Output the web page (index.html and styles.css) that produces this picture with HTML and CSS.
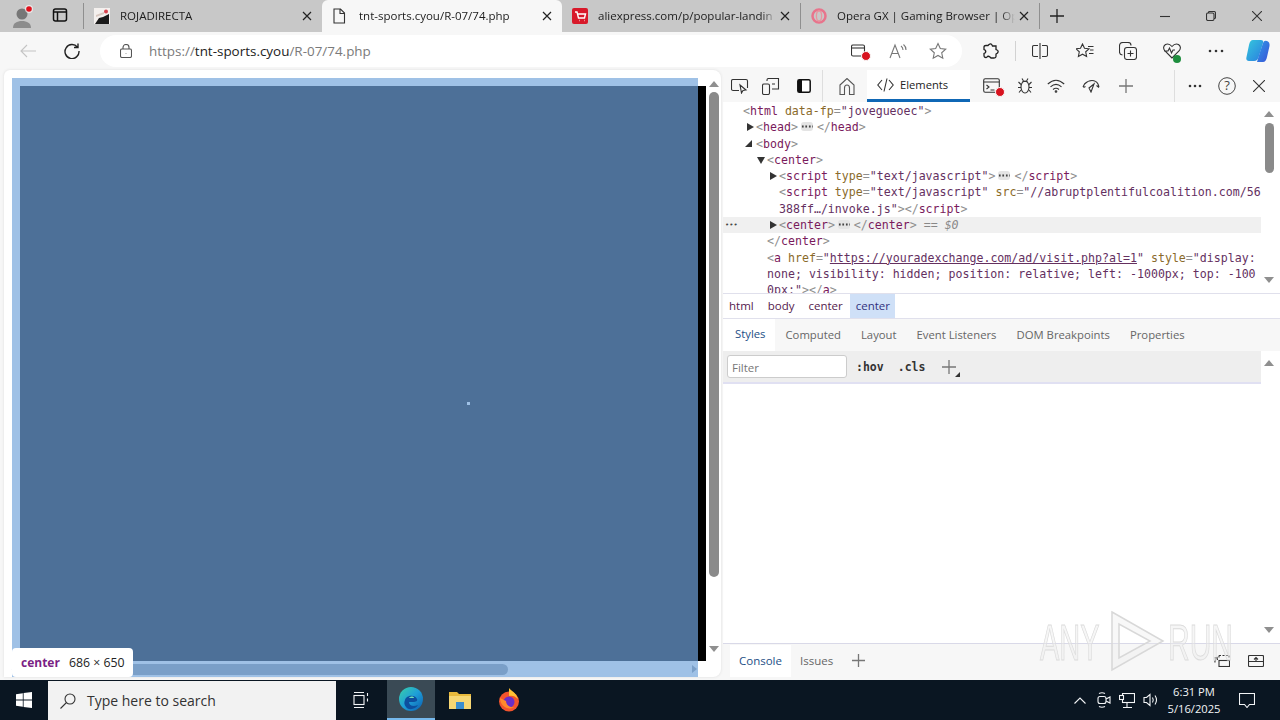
FILE: index.html
```html
<!DOCTYPE html>
<html lang="en">
<head>
  <meta charset="UTF-8">
  <title>tnt-sports.cyou/R-07/74.php</title>
  <link rel="stylesheet" href="styles.css">
</head>
<body>

  <!-- tab strip -->
  <div class="tabstrip">
    <div class="profile">
      <svg width="22" height="24" viewBox="0 0 22 24"><circle cx="10" cy="10" r="5.5" fill="#777"/><path d="M1 24c0-5 4-7 9-7s9 2 9 7z" fill="#8c8c8c"/><circle cx="17" cy="5" r="4" fill="#fff" opacity=".6"/><circle cx="17" cy="5" r="2.8" fill="#e0101c"/></svg>
    </div>
    <div class="strip-btn">
      <svg class="ico" width="16" height="16" viewBox="0 0 16 16"><rect x="1.5" y="2" width="13" height="12" rx="2"/><path d="M1.5 5h13M5.5 5v9" /></svg>
    </div>
    <div class="tab first">
      <svg width="16" height="16" viewBox="0 0 16 16"><rect width="16" height="16" fill="#f4f0ee"/><path d="M1 16l4-6 4-1 6-3v10z" fill="#1b1b1b"/><path d="M2 7l8-3v2l-8 3z" fill="#d9c8c0"/><circle cx="12" cy="3.5" r="2" fill="#d8434e"/></svg>
      <span class="tab-title">ROJADIRECTA</span>
      <svg class="ico close" width="10" height="10" viewBox="0 0 10 10"><path d="M1 1l8 8M9 1l-8 8"/></svg>
    </div>
    <div class="tab active">
      <svg class="ico" width="14" height="16" viewBox="0 0 14 16"><path d="M2 1h6.5L12.5 5v10H2zM8 1v4.5h4.5"/></svg>
      <span class="tab-title">tnt-sports.cyou/R-07/74.php</span>
      <svg class="ico close" width="10" height="10" viewBox="0 0 10 10"><path d="M1 1l8 8M9 1l-8 8"/></svg>
    </div>
    <div class="tab">
      <svg width="16" height="16" viewBox="0 0 16 16"><rect width="16" height="16" rx="2" fill="#d8192a"/><path d="M3 4h2l1.5 6h6l1-4H6M7 12.5h.5M12 12.5h.5" fill="none" stroke="#fff" stroke-width="1.4"/></svg>
      <span class="tab-title">aliexpress.com/p/popular-landin</span>
      <svg class="ico close" width="10" height="10" viewBox="0 0 10 10"><path d="M1 1l8 8M9 1l-8 8"/></svg>
    </div>
    <div class="tab last">
      <svg width="16" height="16" viewBox="0 0 16 16"><circle cx="8" cy="8" r="6.5" fill="none" stroke="#e8748c" stroke-width="2.5"/><ellipse cx="8" cy="8" rx="2.6" ry="5" fill="none" stroke="#e8949f" stroke-width="1.3"/></svg>
      <span class="tab-title">Opera GX | Gaming Browser | Op</span>
      <svg class="ico close" width="10" height="10" viewBox="0 0 10 10"><path d="M1 1l8 8M9 1l-8 8"/></svg>
    </div>
    <div class="new-tab">
      <svg class="ico" width="14" height="14" viewBox="0 0 14 14"><path d="M7 0v14M0 7h14"/></svg>
    </div>
    <div class="win-controls">
      <svg class="ico" width="10" height="10" viewBox="0 0 10 10"><path d="M0 5.5h10"/></svg>
      <svg class="ico" width="10" height="10" viewBox="0 0 10 10"><rect x=".5" y="2" width="7.5" height="7.5" rx="1.5"/><path d="M2.5 2V1.5q0-1 1-1H8q1.5 0 1.5 1.5v4.5q0 1-1 1H8"/></svg>
      <svg class="ico" width="10" height="10" viewBox="0 0 10 10"><path d="M0 0l10 10M10 0L0 10"/></svg>
    </div>
  </div>

  <!-- address bar -->
  <div class="toolbar">
    <svg class="ico back" width="16" height="14" viewBox="0 0 16 14"><path d="M16 7H1M7 1L1 7l6 6"/></svg>
    <svg class="ico refresh" width="16" height="16" viewBox="0 0 16 16"><path d="M13.5 4.2A7 7 0 1 0 15 8M14 .5v4h-4"/></svg>
    <div class="address">
      <svg class="ico lock" width="12" height="14" viewBox="0 0 12 14"><rect x=".5" y="5" width="11" height="8.5" rx="1.5"/><path d="M3 5V3.5a3 3 0 0 1 6 0V5M6 9v.5"/></svg>
      <span class="url">https://<b>tnt-sports.cyou</b>/R-07/74.php</span>
      <div class="address-icons">
        <span class="badged">
          <svg class="ico" width="16" height="14" viewBox="0 0 16 14"><rect x=".5" y="1" width="13" height="11" rx="1.5"/><path d="M.5 4h13"/></svg>
          <i class="red-dot"></i>
        </span>
        <svg class="ico light" width="18" height="16" viewBox="0 0 18 16"><path d="M1 15L6 2l5 13M3 10.5h6M12 3q2 1.5 2 4M14.5 1.5q2.5 2 2.5 5.5"/></svg>
        <svg class="ico light" width="18" height="18" viewBox="0 0 18 18"><path d="M9 1.5l2.3 5 5.4.6-4 3.7 1.1 5.4L9 13.5l-4.8 2.7 1.1-5.4-4-3.7 5.4-.6z"/></svg>
      </div>
    </div>
    <div class="tool-icons">
      <svg class="ico ext" width="16" height="16" viewBox="0 0 16 16"><path d="M6 1.5q2-1.5 3 .5l.5 1h3.5v3.5l1 .5q2 1 .5 3l-1.5 1v2.5q0 1.5-2 1.5H8l-1-1q-2-1.5-3 0l-1 .5q-2 0-2-2v-2l1-.5q1.5-1.5 0-3l-1-.5V4q0-1.5 2-1.5h2z"/></svg>
      <i class="tool-sep"></i>
      <svg class="ico split" width="16" height="16" viewBox="0 0 16 16"><path d="M8 0v16M6 2.5H2q-1.5 0-1.5 1.5v8q0 1.5 1.5 1.5h4M10 2.5h4q1.5 0 1.5 1.5v8q0 1.5-1.5 1.5h-4"/></svg>
      <svg class="ico fav" width="18" height="16" viewBox="0 0 18 16"><path d="M6.5 1l2 4.3 4.5.5-3.3 3 .9 4.7-4.1-2.3-4.1 2.3.9-4.7L0 5.8l4.5-.5zM12 3.5h5.5M14 7h3.5M13 10.5h4.5"/></svg>
      <svg class="ico coll" width="18" height="18" viewBox="0 0 18 18"><rect x="5.5" y="5.5" width="12" height="12" rx="2.5"/><path d="M11.5 8.5v6M8.5 11.5h6M3.5 13q-3-.5-3-3V4q0-3.5 3.5-3.5h5q3 0 3 3"/></svg>
      <span class="health">
        <svg class="ico" width="18" height="16" viewBox="0 0 18 16"><path d="M9 15L2 8Q-1 4 2.5 1.5 6 0 9 3.5 12-0 15.5 1.5 19 4 16 8L9 15zM1 8h4l1.5-3 2 5 1.5-3h2"/></svg>
        <i class="green-dot"></i>
      </span>
      <svg class="dots" width="16" height="4" viewBox="0 0 16 4"><circle cx="2" cy="2" r="1.3"/><circle cx="8" cy="2" r="1.3"/><circle cx="14" cy="2" r="1.3"/></svg>
      <svg class="copilot" width="24" height="24" viewBox="0 0 24 24"><defs><linearGradient id="cop" x1="0" y1="0" x2="1" y2="1"><stop offset="0" stop-color="#35c8dc"/><stop offset="1" stop-color="#2a7de0"/></linearGradient><linearGradient id="cop2" x1="0" y1="0" x2="1" y2="1"><stop offset="0" stop-color="#2f9be8"/><stop offset="1" stop-color="#3a52d6"/></linearGradient></defs><path d="M7 1h8q3 0 2 3l-4 13q-1 5-5 5H3q-3.500 0-2.500-4L3 6q1-5 4-5z" fill="url(#cop)"/><path d="M11 23l3-10 3-9q1-3 4-2 3 1 2.500 5L21 18q-1 5-4 5z" fill="url(#cop2)"/></svg>
    </div>
  </div>

  <div class="main">
    <!-- page viewport -->
    <div class="viewport">
      <div class="page">
        <div class="page-col">
          <div class="hl-top"></div>
          <div class="hl-mid">
            <div class="hl-left"></div>
            <div class="hl-inner"></div>
            <div class="black-strip"></div>
          </div>
          <div class="hscroll">
            <div class="hthumb"></div>
            <i class="harrow"></i>
          </div>
        </div>
        <div class="vscroll">
          <i class="tri up"></i>
          <div class="vthumb"></div>
          <i class="tri down"></i>
        </div>
      </div>
      <i class="center-dot"></i>
      <div class="hl-tip"><b>center</b><span>686 × 650</span></div>
    </div>

    <!-- devtools -->
    <div class="devtools">
      <div class="dt-toolbar">
        <svg class="ico" width="18" height="16" viewBox="0 0 18 16"><path d="M8 12.5H2q-1.5 0-1.5-1.5V3q0-1.5 1.5-1.5h13Q16.500 1.500 16.500 3v7M9 7l1.500 8 1.500-2.500 3-.5z"/></svg>
        <svg class="ico" width="18" height="17" viewBox="0 0 18 17"><rect x=".5" y="6" width="7" height="10.5" rx="1.5"/><path d="M5 3V2q0-1.5 1.5-1.5h10V11H10M10 6h3"/></svg>
        <svg class="dock" width="14" height="14" viewBox="0 0 14 14"><rect x=".8" y=".8" width="12.4" height="12.4" rx="1.5" fill="#fff" stroke="#111" stroke-width="1.5"/><rect x="1" y="1" width="4" height="12" fill="#111"/></svg>
        <i class="dt-sep"></i>
        <svg class="ico home" width="16" height="17" viewBox="0 0 16 17"><path d="M1 7l7-6.500L15 7v9.500h-4.500V10q0-3-2.500-3T5.500 10v6.500H1z"/></svg>
        <div class="dt-tab">
          <svg class="ico" width="17" height="14" viewBox="0 0 17 14"><path d="M5 2L.8 7 5 12M12 2l4.200 5L12 12M10 .5L7 13.500"/></svg>
          <span>Elements</span>
        </div>
        <span class="badged">
          <svg class="ico" width="18" height="16" viewBox="0 0 18 16"><rect x=".7" y=".7" width="15.6" height="13.6" rx="1.5"/><path d="M.7 4h15.600M3.500 7l2.500 2-2.500 2M7.500 12h4"/></svg>
          <i class="red-dot"></i>
        </span>
        <svg class="ico dt-bug" width="16" height="16" viewBox="0 0 16 16"><ellipse cx="8" cy="9" rx="4" ry="6"/><path d="M5.500 3.500h5M4 6.500L1.500 4M12 6.500L14.500 4M4 9.500H1M12 9.500h3M4 12l-2 2.500M12 12l2 2.500M5 .5l1.500 2.500M11 .5L9.500 3"/></svg>
        <svg class="ico dt-wifi" width="18" height="14" viewBox="0 0 18 14"><path d="M.8 5Q9-2.500 17.200 5M3.500 7.800Q9 3 14.500 7.800M6 10.500q3-2.500 6 0"/><circle cx="9" cy="12.5" r=".8"/></svg>
        <svg class="ico dt-perf" width="18" height="14" viewBox="0 0 18 14"><path d="M1 8l1.500-3Q6 1.500 10 1.500T16 5l1 3M9 13l3-8-5 4zM1.500 8.500l2-1M14.500 6.500l2.500 2"/></svg>
        <svg class="ico faint dt-plus" width="14" height="14" viewBox="0 0 14 14"><path d="M7 0v14M0 7h14"/></svg>
        <i class="dt-sep right"></i>
        <svg class="dots" width="14" height="4" viewBox="0 0 14 4"><circle cx="2" cy="2" r="1.3"/><circle cx="7" cy="2" r="1.3"/><circle cx="12" cy="2" r="1.3"/></svg>
        <svg class="help" width="18" height="18" viewBox="0 0 18 18"><circle cx="9" cy="9" r="8.3" fill="none" stroke="#444"/><text x="9" y="13.2" text-anchor="middle">?</text></svg>
        <svg class="ico dt-close" width="12" height="12" viewBox="0 0 12 12"><path d="M0 0l12 12M12 0L0 12"/></svg>
      </div>

      <div class="dom-pane">
        <div class="dom-tree">
          <div class="row i0"><span class="br">&lt;</span><span class="tg">html</span> <span class="an">data-fp</span><span class="br">=</span><span class="av">"jovegueoec"</span><span class="br">&gt;</span></div>
          <div class="row i1"><i class="arrow"></i><span class="br">&lt;</span><span class="tg">head</span><span class="br">&gt;</span><i class="chip"></i><span class="br">&lt;/</span><span class="tg">head</span><span class="br">&gt;</span></div>
          <div class="row i1"><i class="arrow turning"></i><span class="br">&lt;</span><span class="tg">body</span><span class="br">&gt;</span></div>
          <div class="row i2"><i class="arrow open"></i><span class="br">&lt;</span><span class="tg">center</span><span class="br">&gt;</span></div>
          <div class="row i3"><i class="arrow"></i><span class="br">&lt;</span><span class="tg">script</span> <span class="an">type</span><span class="br">=</span><span class="av">"text/javascript"</span><span class="br">&gt;</span><i class="chip"></i><span class="br">&lt;/</span><span class="tg">script</span><span class="br">&gt;</span></div>
          <div class="row i3"><span class="br">&lt;</span><span class="tg">script</span> <span class="an">type</span><span class="br">=</span><span class="av">"text/javascript"</span> <span class="an">src</span><span class="br">=</span><span class="av">"//abruptplentifulcoalition.com/56</span></div>
          <div class="row i3"><span class="av">388ff…/invoke.js"</span><span class="br">&gt;&lt;/</span><span class="tg">script</span><span class="br">&gt;</span></div>
          <div class="row i3 selected"><span class="row-dots">•••</span><i class="arrow"></i><span class="br">&lt;</span><span class="tg">center</span><span class="br">&gt;</span><i class="chip"></i><span class="br">&lt;/</span><span class="tg">center</span><span class="br">&gt;</span> <span class="eq">== <em>$0</em></span></div>
          <div class="row i2"><span class="br">&lt;/</span><span class="tg">center</span><span class="br">&gt;</span></div>
          <div class="row i2"><span class="br">&lt;</span><span class="tg">a</span> <span class="an">href</span><span class="br">=</span><span class="av">"<u>https://youradexchange.com/ad/visit.php?al=1</u>"</span> <span class="an">style</span><span class="br">=</span><span class="av">"display:</span></div>
          <div class="row i2"><span class="av">none; visibility: hidden; position: relative; left: -1000px; top: -100</span></div>
          <div class="row i2"><span class="av">0px:"</span><span class="br">&gt;&lt;/</span><span class="tg">a</span><span class="br">&gt;</span></div>
        </div>
        <div class="pane-scroll">
          <i class="tri up"></i>
          <div class="dom-thumb"></div>
          <i class="tri down"></i>
        </div>
      </div>

      <div class="crumbs">
        <span>html</span><span>body</span><span>center</span><span class="crumb-on">center</span>
      </div>

      <div class="subtabs">
        <span class="subtab-on">Styles</span><span>Computed</span><span>Layout</span><span>Event Listeners</span><span>DOM Breakpoints</span><span>Properties</span>
      </div>

      <div class="styles-pane">
        <div class="styles-col">
          <div class="filter-bar">
            <div class="filter">Filter</div>
            <span class="mono-btn">:hov</span>
            <span class="mono-btn">.cls</span>
            <svg class="ico faint plus-rule" width="14" height="14" viewBox="0 0 14 14"><path d="M7 0v14M0 7h14"/></svg>
            <i class="corner"></i>
          </div>
        </div>
        <div class="pane-scroll styles-scroll">
          <i class="tri up"></i>
          <i class="tri down"></i>
        </div>
      </div>

      <div class="drawer">
        <span class="drawer-on">Console</span>
        <span class="drawer-tab">Issues</span>
        <svg class="ico faint" width="13" height="13" viewBox="0 0 13 13"><path d="M6.5 0v13M0 6.5h13"/></svg>
        <div class="drawer-right">
          <svg class="ico" width="16" height="12" viewBox="0 0 16 12"><path d="M5 .5h10M5 .5v3M15 .5v3" stroke-dasharray="2 1.5"/><rect x="5" y="5.5" width="10.5" height="6"/><path d="M3 3Q.5 4.5 1 7.5M.5 3l2.500-.5L3.500 5"/></svg>
          <svg class="ico" width="16" height="12" viewBox="0 0 16 12"><rect x=".5" y=".5" width="15" height="11" rx="1"/><path d="M.5 6.5h15M8 6V2.500M6 4.500l2-2 2 2"/></svg>
        </div>
      </div>
    </div>

    <div class="watermark">
      <span class="wm-any">ANY</span>
      <svg width="55" height="62" viewBox="0 0 55 62"><path d="M2 2l51 29L2 60zM9 14v34l31-17z" fill="rgba(235,235,235,.35)" stroke="#d8d8d8" stroke-width="1.5"/></svg>
      <span class="wm-run">RUN</span>
    </div>
  </div>

  <!-- windows taskbar -->
  <div class="taskbar">
    <div class="start">
      <svg width="16" height="16" viewBox="0 0 16 16"><path d="M0 2.200L6.800 1.200V7.600H0zM7.600 1.100L16 0V7.600H7.600zM0 8.400H6.800V14.800L0 13.800zM7.600 8.400H16V16L7.600 14.900z" fill="#fff"/></svg>
    </div>
    <div class="search">
      <svg class="ico" width="16" height="16" viewBox="0 0 16 16"><circle cx="10" cy="6" r="5"/><path d="M6.500 9.500L.5 15.500"/></svg>
      <span>Type here to search</span>
    </div>
    <div class="task-btn">
      <svg class="ico white" width="16" height="16" viewBox="0 0 16 16"><path d="M1 .5h10M1 15.500h10"/><rect x="1" y="3.5" width="10" height="9"/><path d="M14.500 1v3M14.500 6.500v3"/></svg>
    </div>
    <div class="task-btn on">
      <svg width="24" height="24" viewBox="0 0 24 24"><defs><linearGradient id="edge" x1="0" y1="0" x2="1" y2="1"><stop offset="0" stop-color="#3ad0a8"/><stop offset=".5" stop-color="#1e9fd8"/><stop offset="1" stop-color="#0c5cb0"/></linearGradient></defs><circle cx="12" cy="12" r="12" fill="url(#edge)"/><path d="M6 13c1-5 10-6 12-1 1 2-1 3-4 3H10c0 4 5 5 9 3-2 4-9 6-12 2-2-2-2-5-1-7z" fill="#0d4f9e"/><path d="M10 11c1-2 5-2 5 0z" fill="#6fe0b8"/></svg>
    </div>
    <div class="task-btn">
      <svg width="22" height="20" viewBox="0 0 22 20"><path d="M0 2h8l2 2h12v15H0z" fill="#e8b93c"/><rect y="6" width="22" height="13" fill="#f7d774"/><rect x="7" y="12" width="8" height="7" fill="#3b8ed0"/></svg>
    </div>
    <div class="task-btn">
      <svg width="24" height="24" viewBox="0 0 24 24"><circle cx="12" cy="13.5" r="10" fill="#f2542d"/><path d="M12 0c2 3 7 4 9 11-3-3-6-4-9-3z" fill="#ffc233"/><circle cx="12" cy="14" r="5.5" fill="#6a2ec8"/><path d="M3 10c0 8 8 13 15 9-5 1-9-2-9-6z" fill="#ff8a2c"/></svg>
    </div>
    <div class="tray">
      <svg class="ico white chevron" width="12" height="7" viewBox="0 0 12 7"><path d="M.5 6.500L6 1l5.500 5.500"/></svg>
      <svg class="ico white" width="14" height="16" viewBox="0 0 14 16"><rect x="1" y="4.5" width="8" height="7" rx="2"/><path d="M9 7l4-2v6L9 9M2 1.500q3-1.500 6 0M2 14.500q3 1.500 6 0"/></svg>
      <svg class="ico white" width="16" height="15" viewBox="0 0 16 15"><rect x="3.5" y=".5" width="12" height="9"/><rect x=".5" y="2.5" width="4" height="4" fill="#0a1622"/><path d="M8 9.500v5M4 14.500h9"/></svg>
      <svg class="ico white" width="16" height="14" viewBox="0 0 16 14"><path d="M1 4.500h2.500L7 1.500v11l-3.500-3H1zM9.500 4.500q1.500 2.500 0 5M12 2.500q3 4.500 0 9"/></svg>
      <div class="clock"><span>6:31 PM</span><span>5/16/2025</span></div>
      <svg class="ico white notif" width="16" height="15" viewBox="0 0 16 15"><path d="M.5.500h15v11h-5L8 14.500 5.500 11.500h-5z"/></svg>
    </div>
  </div>

</body>
</html>
```
FILE: styles.css
```css
* {
  box-sizing: border-box;
}

html,
body {
  margin: 0;
  height: 100%;
}

body {
  width: 1280px;
  height: 720px;
  overflow: hidden;
  display: flex;
  flex-direction: column;
  font-family: "Open Sans", "Noto Sans", sans-serif;
  font-size: 12px;
  color: #222;
  background: #f7f7f7;
}

i {
  font-style: normal;
}

svg {
  flex: none;
  display: block;
}

.ico {
  fill: none;
  stroke: #333;
  stroke-width: 1.1;
}

.ico.light {
  stroke: #777;
}

.ico.faint {
  stroke: #777;
  stroke-width: 1.3;
}

.ico.white {
  stroke: #f2f4f6;
}

.dots {
  fill: #333;
}

/* tab strip */

.tabstrip {
  height: 32px;
  flex: none;
  display: flex;
  align-items: stretch;
  background: #c8c8c8;
}

.profile {
  width: 44px;
  padding: 4px 0 0 12px;
}

.strip-btn {
  width: 40px;
  height: 26px;
  align-self: center;
  padding: 4px 0 0 8px;
  border-right: 1px solid #8f8f8f;
}

.strip-btn .ico {
  stroke-width: 1.5;
  stroke: #111;
}

.tab {
  width: 238px;
  display: flex;
  align-items: center;
  gap: 10px;
  padding: 0 10px 1px 10px;
}

.tab.active {
  width: 240px;
  background: #f7f7f7;
  border-radius: 6px 6px 0 0;
  gap: 13px;
}

.tab.last {
  width: 240px;
  height: 26px;
  align-self: center;
  border-left: 1px solid #8f8f8f;
  border-right: 1px solid #8f8f8f;
}

.tab-title {
  flex: 1;
  min-width: 0;
  font-size: 11.5px;
  white-space: nowrap;
  color: #1c1c1c;
  -webkit-mask-image: linear-gradient(to left, transparent 0, #000 14px);
  mask-image: linear-gradient(to left, transparent 0, #000 14px);
}

.close {
  margin-left: -6px;
  stroke: #222;
  stroke-width: 1.2;
}

.new-tab {
  width: 34px;
  display: flex;
  align-items: center;
  justify-content: center;
}

.new-tab .ico {
  stroke: #222;
  stroke-width: 1.3;
}

.win-controls {
  margin-left: auto;
  width: 138px;
  display: flex;
  align-items: center;
  justify-content: space-between;
  padding: 0 18px;
}

/* address bar */

.toolbar {
  height: 38px;
  flex: none;
  display: flex;
  align-items: center;
  padding-left: 20px;
  background: #f7f7f7;
}

.back {
  stroke: #c4c4c4;
}

.refresh {
  margin-left: 28px;
  stroke-width: 1.4;
  stroke: #222;
}

.address {
  width: 862px;
  height: 32px;
  margin-left: 20px;
  padding: 0 15px 0 20px;
  display: flex;
  align-items: center;
  background: #fff;
  border-radius: 16px;
}

.lock {
  stroke: #555;
}

.url {
  margin-left: 17px;
  font-size: 13.45px;
  color: #7a7a7a;
}

.url b {
  font-weight: 400;
  color: #222;
}

.address-icons {
  margin-left: auto;
  display: flex;
  align-items: center;
  gap: 22px;
}

.badged {
  position: relative;
  display: block;
}

.red-dot {
  position: absolute;
  right: -4px;
  bottom: -3px;
  width: 10px;
  height: 10px;
  border-radius: 50%;
  background: #d8131f;
  border: 1px solid #f7f7f7;
}

.tool-icons {
  flex: 1;
  display: flex;
  align-items: center;
  padding-left: 21px;
}

.ext {
  stroke-width: 1.3;
  stroke: #222;
}

.tool-sep {
  width: 1px;
  height: 20px;
  margin: 0 16px;
  background: #d2d2d2;
}

.fav {
  margin-left: 28px;
}

.coll {
  margin-left: 25px;
}

.health {
  position: relative;
  margin-left: 26px;
}

.green-dot {
  position: absolute;
  right: 0;
  bottom: -4px;
  width: 8px;
  height: 8px;
  border-radius: 50%;
  background: #1e8e3e;
}

.tool-icons > .dots {
  margin-left: 27px;
}

.copilot {
  margin-left: 22px;
}

/* main area */

.main {
  flex: 1;
  min-height: 0;
  display: flex;
  position: relative;
  padding-left: 4px;
}

.viewport {
  width: 717px;
  height: 607px;
  padding: 8px 0 0 8px;
  position: relative;
  background: #fff;
  border-radius: 6px 8px 8px 0;
  box-shadow: 0 0 3px #ddd;
}

.page {
  height: 100%;
  display: flex;
}

.page-col {
  width: 694px;
  display: flex;
  flex-direction: column;
}

.hl-top {
  height: 8px;
  width: 686px;
  background: #9fc1e6;
}

.hl-mid {
  flex: 1;
  display: flex;
}

.hl-left {
  width: 8px;
  background: #9fc1e6;
}

.hl-inner {
  width: 678px;
  background: #4d7098;
}

.black-strip {
  width: 8px;
  background: #000;
}

.hscroll {
  height: 16px;
  width: 686px;
  padding-top: 3px;
  position: relative;
  background: #9fc1e6;
}

.hthumb {
  width: 496px;
  height: 11px;
  border-radius: 6px;
  background: #7a9fc8;
}

.harrow {
  position: absolute;
  right: 1px;
  top: 4px;
  border-left: 5px solid #7a9fc8;
  border-top: 4px solid transparent;
  border-bottom: 4px solid transparent;
}

.vscroll {
  width: 15px;
  display: flex;
  flex-direction: column;
  align-items: center;
  padding: 3px 0 25px;
}

.vthumb {
  width: 10px;
  height: 485px;
  margin: 5px 0 auto;
  border-radius: 5px;
  background: #8a8a8a;
}

.tri {
  display: block;
  border-left: 5px solid transparent;
  border-right: 5px solid transparent;
}

.tri.up {
  border-bottom: 6px solid #8f8f8f;
}

.tri.down {
  border-top: 6px solid #8f8f8f;
}

.center-dot {
  position: absolute;
  left: 463px;
  top: 332px;
  width: 3px;
  height: 3px;
  background: #9fc1e6;
}

.hl-tip {
  position: absolute;
  left: 8px;
  bottom: 0;
  width: 121px;
  height: 29px;
  padding-left: 9px;
  display: flex;
  align-items: center;
  gap: 9px;
  background: #fff;
  border-radius: 4px;
  font-size: 12.3px;
}

.hl-tip b {
  color: #7b1f85;
  font-size: 12px;
  font-weight: 700;
}

/* devtools */

.devtools {
  width: 557px;
  height: 610px;
  margin-left: 2px;
  padding-bottom: 3px;
  display: flex;
  flex-direction: column;
  background: #f7f7f7;
}

.dt-toolbar {
  height: 32px;
  flex: none;
  display: flex;
  align-items: center;
  padding-left: 8px;
  gap: 13px;
  background: #f7f7f7;
}

.dock {
  margin-left: 4px;
}

.dt-sep {
  width: 1px;
  height: 32px;
  margin-left: -2px;
  background: #dedede;
}

.dt-sep.right {
  margin-left: 28px;
}

.dt-tab {
  width: 103px;
  height: 32px;
  padding-left: 10px;
  display: flex;
  align-items: center;
  gap: 6px;
  font-size: 11.2px;
  background: #fff;
  border-bottom: 3px solid #0f67b5;
}

.home {
  margin-left: 3px;
  margin-right: -1px;
  stroke: #555;
}

.dt-bug {
  margin-left: 3px;
}

.dt-wifi {
  margin-left: 1px;
}

.dt-perf {
  margin-left: 4px;
}

.dt-plus {
  margin-left: 6px;
}

.help {
  margin-left: 3px;
}

.dt-close {
  margin-left: 4px;
}

.help text {
  font-size: 13px;
  fill: #444;
}

/* dom tree */

.dom-pane {
  height: 192px;
  flex: none;
  display: flex;
  background: #fff;
  border-bottom: 1px solid #e0e0ec;
}

.dom-tree {
  width: 538px;
  padding-top: 1px;
  font-family: "DejaVu Sans Mono", "Liberation Mono", monospace;
  font-size: 11.6px;
  overflow: hidden;
}

.row {
  height: 16.3px;
  line-height: 16.3px;
  white-space: nowrap;
  position: relative;
  color: #7a7a7a;
}

.i0 {
  padding-left: 20px;
}

.i1 {
  padding-left: 33px;
}

.i2 {
  padding-left: 44px;
}

.i3 {
  padding-left: 56px;
}

.selected {
  background: #f0f0f0;
}

.row-dots {
  position: absolute;
  left: 2px;
  top: 0;
  font-size: 7px;
  color: #444;
}

.arrow {
  position: absolute;
  margin: 4px 0 0 -9px;
  border-left: 7px solid #333;
  border-top: 4px solid transparent;
  border-bottom: 4px solid transparent;
}

.arrow.open {
  margin: 5px 0 0 -10px;
  border-left: 4.5px solid transparent;
  border-right: 4.5px solid transparent;
  border-top: 7px solid #333;
  border-bottom: 0;
}

.arrow.turning {
  margin: 4px 0 0 -11px;
  border-left: 7px solid transparent;
  border-top: 0;
  border-bottom: 7px solid #333;
}

.br {
  color: #8f8f8f;
}

.tg {
  color: #7a1a5c;
}

.an {
  color: #8a6a2a;
}

.av {
  color: #64305f;
}

.eq {
  color: #888;
}

.eq em {
  font-style: italic;
}

.chip {
  display: inline-block;
  width: 12px;
  height: 9px;
  margin: 0 4px 0 3px;
  border-radius: 3px;
  background: radial-gradient(circle, #444 1px, transparent 1.2px) 0 0 / 3.5px 9px repeat-x #e4e4e4;
}

.pane-scroll {
  flex: 1;
  display: flex;
  flex-direction: column;
  align-items: center;
  padding: 9px 3px 10px 0;
  background: #fff;
}

.dom-thumb {
  width: 9px;
  height: 50px;
  margin: 6px 0 auto;
  border-radius: 5px;
  background: #8a8a8a;
}

.styles-scroll .tri.up {
  margin-bottom: auto;
}

/* breadcrumbs and sub panes */

.crumbs {
  height: 25px;
  flex: none;
  display: flex;
  align-items: stretch;
  padding-left: 1px;
  font-size: 11.5px;
  color: #551a4d;
  background: #fff;
  border-bottom: 1px solid #e0e0ec;
}

.crumbs span {
  padding: 0 5px;
  margin-right: 4px;
  line-height: 24px;
}

.crumbs .crumb-on {
  width: 45px;
  margin-left: -2px;
  padding: 0 6px;
  background: #cfe0f7;
  color: #33337e;
}

.subtabs {
  height: 32px;
  flex: none;
  display: flex;
  align-items: center;
  gap: 20px;
  padding-bottom: 2px;
  font-size: 11.3px;
  color: #666;
  background: #f7f7f7;
}

.subtabs .subtab-on {
  height: 32px;
  margin: 2px -10px 0 0;
  line-height: 29px;
  padding: 0 10px 0 12px;
  color: #1d4f86;
  background: #fff;
}

.styles-pane {
  flex: 1;
  min-height: 0;
  display: flex;
  background: #fff;
  border-bottom: 1px solid #d9d9e8;
}

.styles-col {
  width: 538px;
}

.filter-bar {
  height: 33px;
  display: flex;
  align-items: center;
  padding-left: 4px;
  background: #eee;
  border-bottom: 2px solid #e0e0f2;
  position: relative;
}

.filter {
  width: 120px;
  height: 23px;
  padding-left: 4px;
  line-height: 23px;
  font-size: 11.5px;
  color: #777;
  background: #fff;
  border: 1px solid #ccc;
  border-radius: 3px;
}

.mono-btn {
  margin-left: 9px;
  margin-right: 5px;
  font-family: "DejaVu Sans Mono", monospace;
  font-size: 11.5px;
  font-weight: 700;
  color: #333;
}

.plus-rule {
  margin-left: 12px;
}

.corner {
  position: absolute;
  left: 232px;
  top: 21px;
  border-bottom: 5px solid #333;
  border-left: 5px solid transparent;
}

.drawer {
  height: 33px;
  flex: none;
  display: flex;
  align-items: center;
  padding-left: 7px;
  background: #f7f7f7;
}

.drawer-on {
  padding: 0 9px;
  line-height: 32px;
  font-size: 11.5px;
  color: #1d4f86;
  background: #fff;
}

.drawer-tab {
  margin: 0 19px 0 9px;
  font-size: 11.5px;
  color: #666;
}

.drawer-right {
  margin-left: auto;
  display: flex;
  gap: 18px;
  padding-right: 16px;
}

/* any.run mark lying over the bottom right corner */

.watermark {
  position: absolute;
  left: 1040px;
  top: 540px;
  display: flex;
  align-items: center;
  font-family: "Liberation Sans", sans-serif;
  font-size: 50px;
  color: rgba(235, 235, 235, .45);
  -webkit-text-stroke: 1px #dcdcdc;
  pointer-events: none;
}

.wm-any,
.wm-run {
  display: block;
  width: 60px;
  padding-top: 3px;
  white-space: nowrap;
  transform: scaleX(.58);
  transform-origin: left center;
}

.wm-any {
  margin-right: 10px;
}

.wm-run {
  margin-left: 3px;
  transform: scaleX(.6);
}

/* taskbar */

.taskbar {
  height: 40px;
  flex: none;
  display: flex;
  align-items: stretch;
  background: #0a1622;
  color: #f2f4f6;
}

.start {
  width: 48px;
  display: flex;
  align-items: center;
  justify-content: center;
}

.search {
  width: 288px;
  margin-top: 1px;
  padding-left: 12px;
  display: flex;
  align-items: center;
  gap: 11px;
  font-size: 14px;
  color: #333;
  background: #f2f2f2;
}

.task-btn {
  width: 49px;
  display: flex;
  align-items: center;
  justify-content: center;
}

.task-btn.on {
  width: 48px;
  margin-left: 2px;
  background: #3a4a55;
  border-bottom: 2px solid #76b9ed;
}

.tray {
  margin-left: auto;
  display: flex;
  align-items: center;
  gap: 8px;
  padding-right: 25px;
}

.chevron {
  margin-right: 3px;
}

.clock {
  width: 68px;
  margin-left: -7px;
  display: flex;
  flex-direction: column;
  align-items: center;
  font-size: 11.2px;
  line-height: 17px;
}

.notif {
  margin-left: 3px;
}
```
